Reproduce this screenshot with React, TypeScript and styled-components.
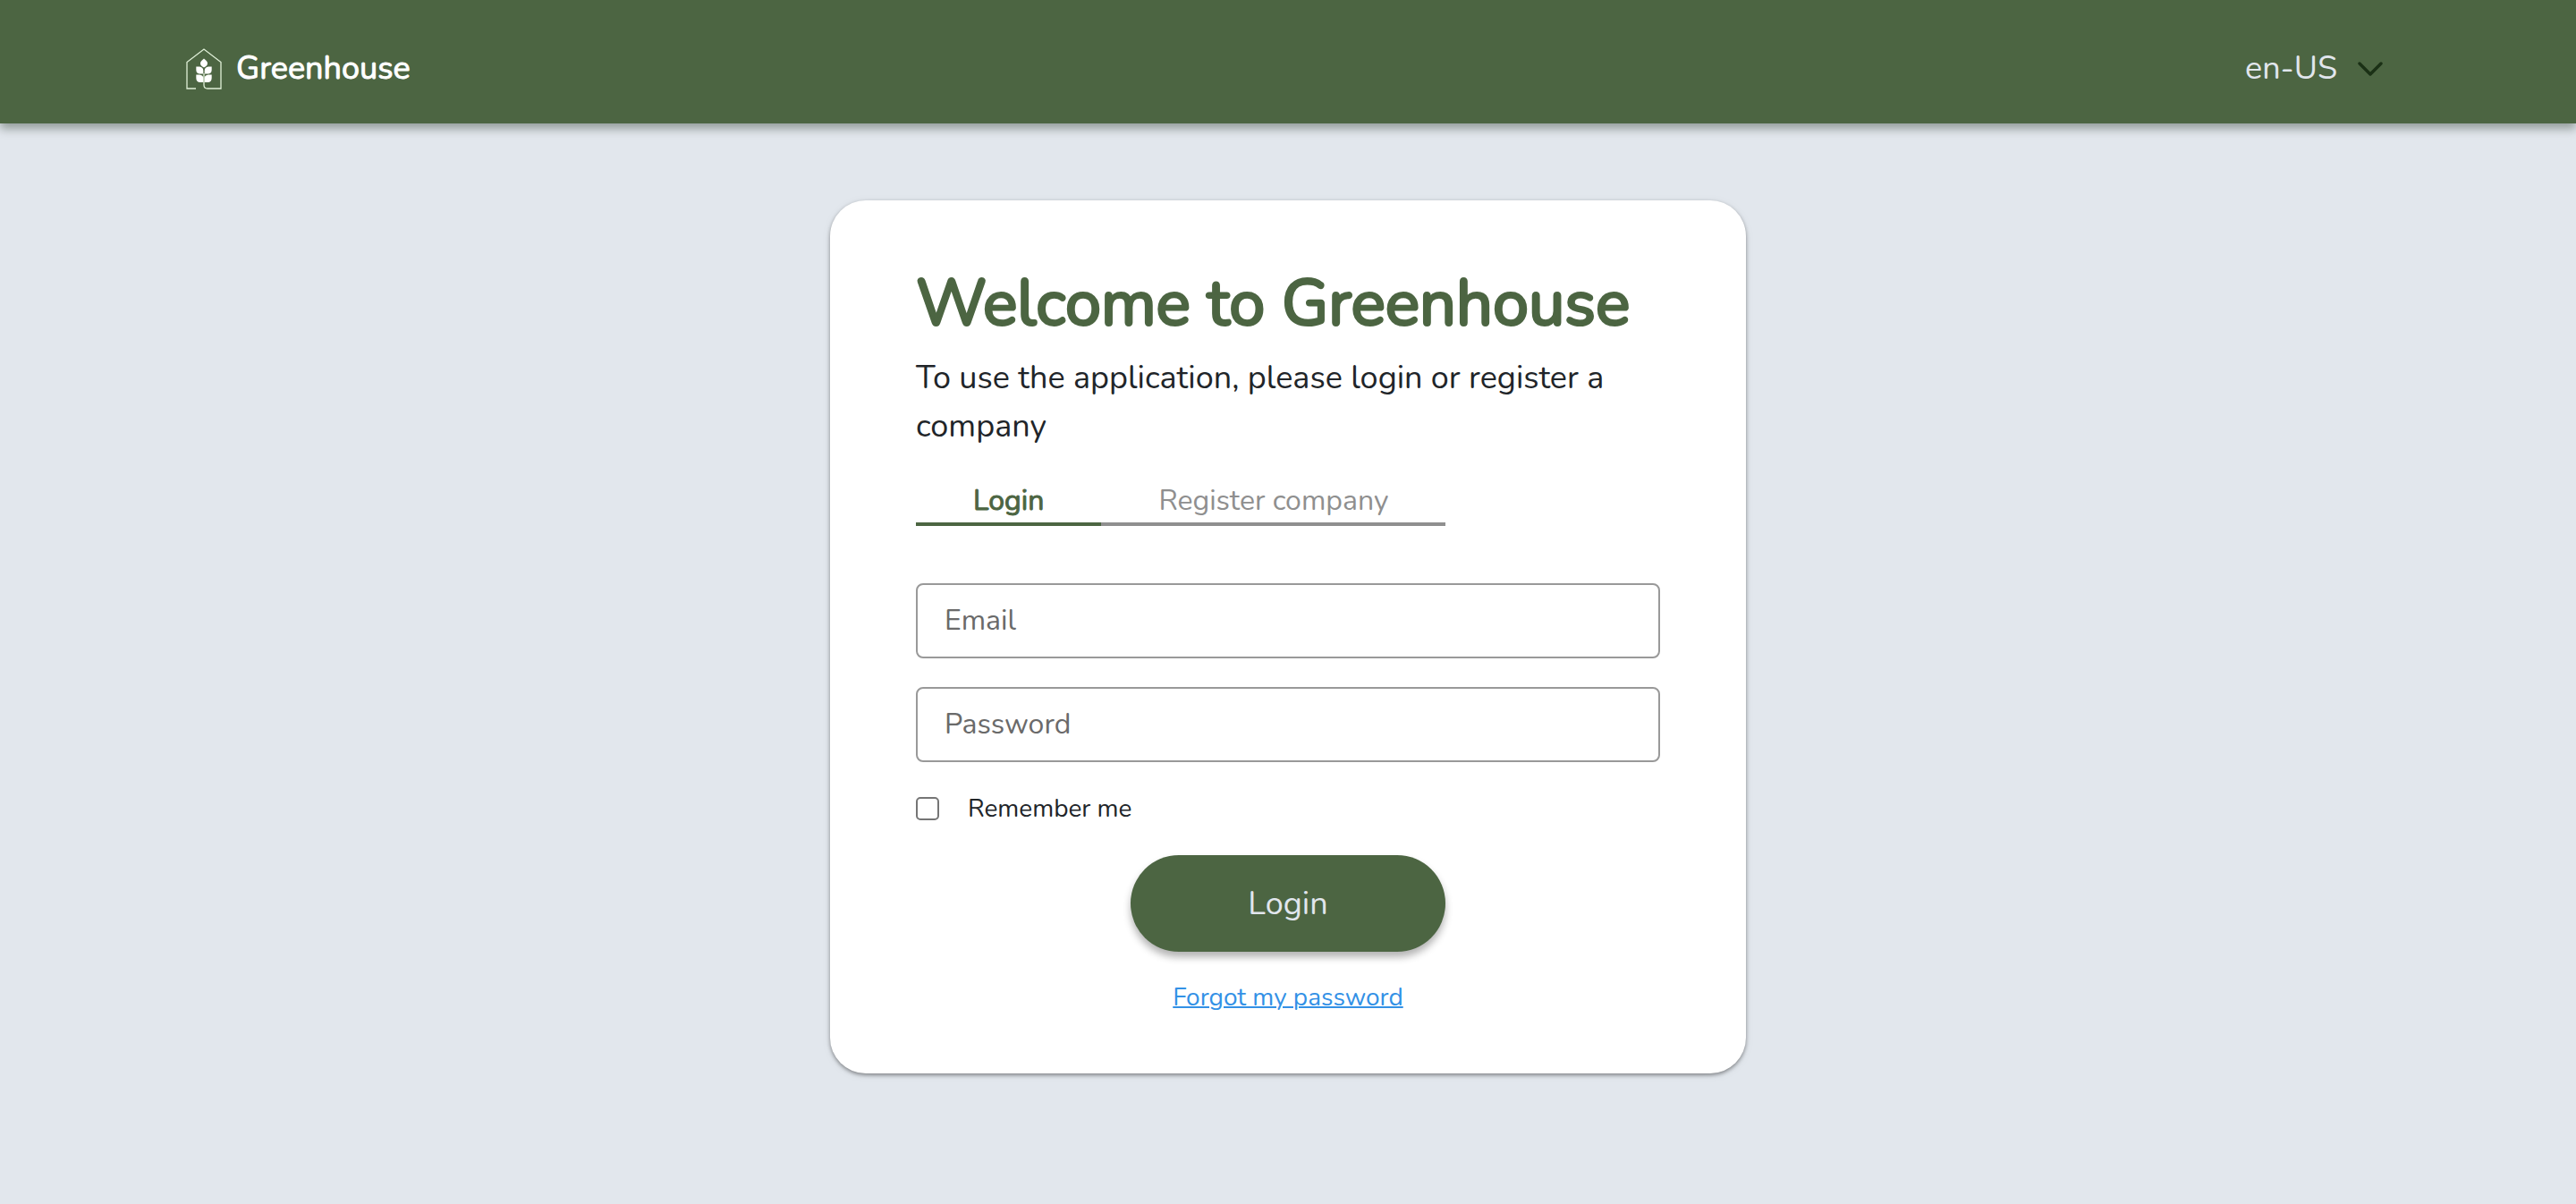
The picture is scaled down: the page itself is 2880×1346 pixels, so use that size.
import React, { useState } from "react";
import styled, { createGlobalStyle } from "styled-components";

const green = "#4c6542";
const fontStack = `"Nunito", "Open Sans", "Noto Sans", sans-serif`;

const GlobalStyle = createGlobalStyle`
  *, *::before, *::after { box-sizing: border-box; }
  body {
    margin: 0;
    background: #e2e7ed;
    color: #212529;
    font-family: ${fontStack};
    font-size: 36px;
  }
  button, input, select { font: inherit; }
`;

const Page = styled.div`
  display: flex;
  flex-direction: column;
  min-height: 100vh;
`;

const Header = styled.header`
  display: flex;
  align-items: center;
  justify-content: space-between;
  padding: 50px 216px 34px 208px;
  background: ${green};
  box-shadow: 0 6px 10px rgba(0, 20, 0, 0.35);
`;

const Brand = styled.a`
  display: flex;
  align-items: center;
  gap: 16px;
  color: #fff;
  line-height: 54px;
  text-decoration: none;
  -webkit-text-stroke: 1px currentColor;
`;

const LanguagePicker = styled.label`
  display: grid;
  align-items: center;
  color: #e1e6ed;

  > * { grid-area: 1 / 1; }
  > svg { justify-self: end; pointer-events: none; }
`;

const LanguageSelect = styled.select`
  appearance: none;
  border: 0;
  padding: 0 50px 0 0;
  background: transparent;
  color: inherit;
  line-height: 54px;
`;

const Main = styled.main`
  display: flex;
  justify-content: center;
  padding: 86px 32px;
`;

const Card = styled.section`
  display: flex;
  flex-direction: column;
  width: 100%;
  max-width: 1024px;
  padding: 72px 96px 64px;
  border-radius: 40px;
  background: #fff;
  box-shadow: 0 2px 4px rgba(0, 0, 0, 0.4), 0 2px 12px rgba(0, 0, 0, 0.06);
`;

const Title = styled.h1`
  margin: 0 0 14px;
  color: ${green};
  font-size: 72px;
  font-weight: 400;
  line-height: 86px;
  -webkit-text-stroke: 3px currentColor;
`;

const Lead = styled.p`
  margin: 0 0 32px;
  line-height: 54px;
`;

const Tabs = styled.div`
  display: flex;
  margin-bottom: 64px;
`;

const Tab = styled.button<{ $active: boolean }>`
  padding: 0 64px;
  border: 0;
  border-bottom: 4px solid ${(p) => (p.$active ? green : "#8f8f8f")};
  background: transparent;
  color: ${(p) => (p.$active ? green : "#8f8f8f")};
  font-size: 32px;
  line-height: 48px;
  -webkit-text-stroke: ${(p) => (p.$active ? "1px" : "0")} currentColor;
`;

const Form = styled.form`
  display: flex;
  flex-direction: column;
`;

const Field = styled.input`
  width: 100%;
  height: 84px;
  margin-bottom: 32px;
  padding: 0 30px 2px;
  border: 2px solid #999;
  border-radius: 8px;
  background: #fff;
  color: inherit;
  font-size: 32px;

  &::placeholder { color: #6a6a6a; opacity: 1; }
`;

const Remember = styled.label`
  display: flex;
  align-items: center;
  align-self: flex-start;
  gap: 32px;
  margin-bottom: 32px;
  font-size: 28px;
  line-height: 40px;
`;

const Checkbox = styled.input`
  appearance: none;
  width: 26px;
  height: 26px;
  margin: 0;
  border: 2px solid #757575;
  border-radius: 5px;
  background: #fff;

  &:checked { background: ${green}; }
`;

const Submit = styled.button`
  align-self: center;
  width: 352px;
  height: 108px;
  margin-bottom: 30px;
  border: 0;
  border-radius: 54px;
  background: ${green};
  color: #e1e6ed;
  box-shadow: 0 6px 8px rgba(0, 0, 0, 0.3);
`;

const ForgotLink = styled.a`
  align-self: center;
  color: #3391e6;
  font-size: 28px;
  line-height: 42px;
  text-decoration-thickness: 2px;
`;

const Logo = () => (
  <svg width="40" height="46" viewBox="0 0 40 46" fill="none" aria-hidden="true">
    <path d="M11 45H1V15.5L20 1L39 15.5V45H24Q20 45 20 41V28" stroke="#e0f0d8" strokeWidth="1.3" />
    <g fill="#fff">
      <path d="M20 11.5C22.5 13.5 24 15 24 17S22.5 20 20 21.5C17.5 20 16 19 16 17S17.5 13.5 20 11.5Z" />
      <path d="M11.3 20.5H15Q19.3 21 19.3 25V28.5H15Q11.3 28 11.3 24Z" />
      <path d="M28.7 20.5H25Q20.7 21 20.7 25V28.5H25Q28.7 28 28.7 24Z" />
      <path d="M11.3 29.5H15Q19.3 30 19.3 33V38H15Q11.3 37.5 11.3 33Z" />
      <path d="M28.7 29.5H25Q20.7 30 20.7 33V38H25Q28.7 37.5 28.7 33Z" />
    </g>
  </svg>
);

const Chevron = () => (
  <svg width="28" height="16" viewBox="0 0 28 16" fill="none" aria-hidden="true">
    <path d="M2 2L14 14L26 2" stroke="#1a3015" strokeWidth="3.4" strokeLinecap="round" strokeLinejoin="round" />
  </svg>
);

const tabNames = ["Login", "Register company"];

export default function App() {
  const [active, setActive] = useState(tabNames[0]);

  return (
    <Page>
      <GlobalStyle />
      <Header>
        <Brand href="#">
          <Logo />
          Greenhouse
        </Brand>
        <LanguagePicker>
          <LanguageSelect aria-label="Language" defaultValue="en-US">
            <option>en-US</option>
          </LanguageSelect>
          <Chevron />
        </LanguagePicker>
      </Header>
      <Main>
        <Card>
          <Title>Welcome to Greenhouse</Title>
          <Lead>To use the application, please login or register a company</Lead>
          <Tabs role="tablist">
            {tabNames.map((name) => (
              <Tab
                key={name}
                type="button"
                role="tab"
                aria-selected={name === active}
                $active={name === active}
                onClick={() => setActive(name)}
              >
                {name}
              </Tab>
            ))}
          </Tabs>
          <Form onSubmit={(e) => e.preventDefault()}>
            <Field type="email" placeholder="Email" aria-label="Email" />
            <Field type="password" placeholder="Password" aria-label="Password" />
            <Remember>
              <Checkbox type="checkbox" />
              Remember me
            </Remember>
            <Submit type="submit">Login</Submit>
            <ForgotLink href="#">Forgot my password</ForgotLink>
          </Form>
        </Card>
      </Main>
    </Page>
  );
}
